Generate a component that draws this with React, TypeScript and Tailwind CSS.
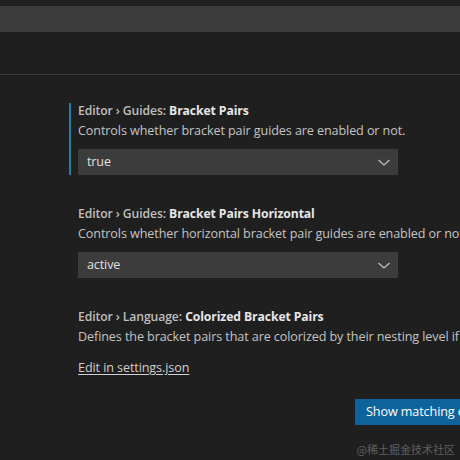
import React from "react";

function Chevron() {
  return (
    <svg width="16" height="16" viewBox="0 0 16 16" className="shrink-0">
      <path d="M2.5 6 L8 11 L13.5 6" fill="none" stroke="#c5c5c5" strokeWidth="1.1" />
    </svg>
  );
}

function Select({ value }: { value: string }) {
  return (
    <div className="flex h-[26px] w-[320px] items-center justify-between bg-[#3c3c3c] pl-[9px] pr-[6px] text-[12.5px] tracking-[-0.1px] text-[#e0e0e0]">
      <span className="leading-[26px]">{value}</span>
      <Chevron />
    </div>
  );
}

function Title({ cat, label }: { cat: string; label: string }) {
  return (
    <div className="h-[16px] text-[12.2px] leading-[16px] tracking-[-0.1px] font-semibold text-[#bfbfbf]">
      {cat} <span className="font-bold text-[#e7e7e7]">{label}</span>
    </div>
  );
}

function Desc({ children }: { children: React.ReactNode }) {
  return (
    <div className="mt-[4px] h-[16px] text-[12.6px] leading-[16px] tracking-[-0.1px] text-[#c4c4c4]">{children}</div>
  );
}

export default function App() {
  return (
    <div
      className="relative h-[460px] w-[460px] overflow-hidden whitespace-nowrap bg-[#1f1f1f]"
      style={{ fontFamily: '"Open Sans", "Noto Sans", sans-serif' }}
    >
      <div className="mt-[6px] h-[26px] bg-[#3c3c3c]" />
      <div className="h-[42px]" />
      <div className="h-px bg-[#3a3a3a]" />

      <div className="ml-[69px] mt-[28px] border-l-2 border-[#1b81a8] pl-[7px]">
        <Title cat="Editor › Guides:" label="Bracket Pairs" />
        <Desc>Controls whether bracket pair guides are enabled or not.</Desc>
        <div className="mt-[10px]">
          <Select value="true" />
        </div>
      </div>

      <div className="ml-[78px] mt-[31px]">
        <Title cat="Editor › Guides:" label="Bracket Pairs Horizontal" />
        <Desc>Controls whether horizontal bracket pair guides are enabled or not.</Desc>
        <div className="mt-[10px]">
          <Select value="active" />
        </div>
      </div>

      <div className="ml-[78px] mt-[31px]">
        <Title cat="Editor › Language:" label="Colorized Bracket Pairs" />
        <Desc>Defines the bracket pairs that are colorized by their nesting level if bracket pair colorization is enabled.</Desc>
        <div className="mt-[15px] h-[16px] text-[12.6px] leading-[16px] tracking-[-0.1px] text-[#d0d0d0] underline underline-offset-2">
          Edit in settings.json
        </div>
        <div className="ml-[277px] mt-[23px] flex h-[26px] w-max items-center bg-[#0e639c] px-[11px] text-[12.6px] tracking-[-0.1px] text-white">
          Show matching extensions
        </div>
      </div>

      <div
        className="absolute bottom-[4px] right-[5px] text-[11px] leading-[14px] text-[#5f5f5f]"
        style={{ fontFamily: '"Noto Sans CJK SC", sans-serif' }}
      >
        @稀土掘金技术社区
      </div>
    </div>
  );
}
